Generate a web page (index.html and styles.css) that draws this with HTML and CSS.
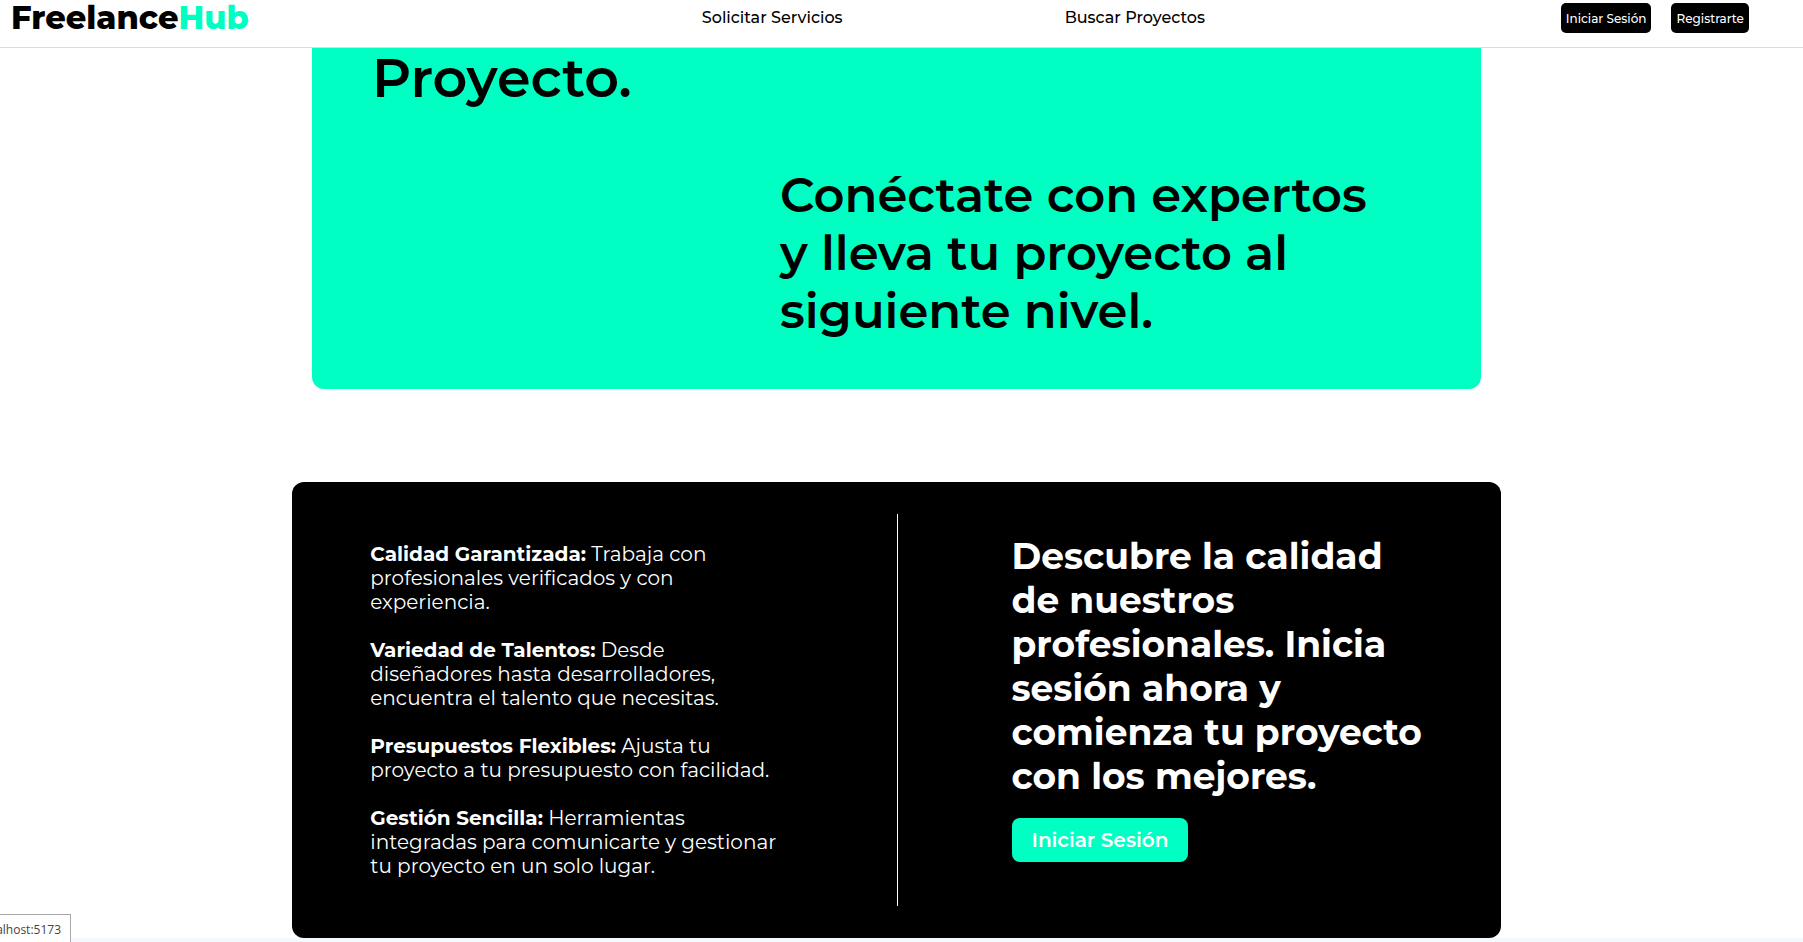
FILE: index.html
```html
<!DOCTYPE html>
<html lang="es">
<head>
  <meta charset="utf-8">
  <meta name="viewport" content="width=device-width, initial-scale=1">
  <title>FreelanceHub</title>
  <link rel="stylesheet" href="styles.css">
</head>
<body>
  <header class="header">
    <div class="logo">Freelance<span class="logo-accent">Hub</span></div>
    <nav class="nav">
      <a class="nav-link" href="#">Solicitar Servicios</a>
      <a class="nav-link" href="#">Buscar Proyectos</a>
    </nav>
    <div class="actions">
      <button class="btn-dark" type="button">Iniciar Sesión</button>
      <button class="btn-dark" type="button">Registrarte</button>
    </div>
  </header>
  <main class="main">
    <section class="hero">
      <h1 class="hero-title">Proyecto.</h1>
      <p class="hero-text">Conéctate con expertos<br>y lleva tu proyecto al<br>siguiente nivel.</p>
    </section>
    <section class="info">
      <div class="benefits">
        <p class="benefit"><strong>Calidad Garantizada:</strong> Trabaja con<br>profesionales verificados y con<br>experiencia.</p>
        <p class="benefit"><strong>Variedad de Talentos:</strong> Desde<br>diseñadores hasta desarrolladores,<br>encuentra el talento que necesitas.</p>
        <p class="benefit"><strong>Presupuestos Flexibles:</strong> Ajusta tu<br>proyecto a tu presupuesto con facilidad.</p>
        <p class="benefit"><strong>Gestión Sencilla:</strong> Herramientas<br>integradas para comunicarte y gestionar<br>tu proyecto en un solo lugar.</p>
      </div>
      <div class="cta">
        <h2 class="cta-title">Descubre la calidad<br>de nuestros<br>profesionales. Inicia<br>sesión ahora y<br>comienza tu proyecto<br>con los mejores.</h2>
        <button class="btn-accent" type="button">Iniciar Sesión</button>
      </div>
    </section>
  </main>
  <div class="status">alhost:5173</div>
</body>
</html>
```

FILE: styles.css
```css
* {
  box-sizing: border-box;
}

body {
  margin: 0;
  background: #f5f8fc;
  color: #000;
  font-family: Montserrat, Inter, sans-serif;
}

h1,
h2,
p {
  margin: 0;
}

button {
  border: 0;
  font-family: inherit;
  color: #fff;
  white-space: nowrap;
  cursor: pointer;
}

.header {
  display: grid;
  grid-template-columns: 4fr 5fr auto;
  align-items: start;
  height: 48px;
  padding: 0 3% 0 11px;
  background: #fff;
  border-bottom: 1px solid #dcdcdc;
}

.logo {
  font-size: 32px;
  line-height: 36px;
  font-weight: 800;
}

.logo-accent {
  color: #00ffc2;
}

.nav {
  display: flex;
  gap: 222px;
  padding-left: 2px;
  line-height: 36px;
}

.nav-link {
  color: #000;
  font-size: 16px;
  font-weight: 500;
  text-decoration: none;
  white-space: nowrap;
}

.actions {
  display: flex;
  gap: 20px;
  padding-top: 3px;
}

.btn-dark {
  height: 30px;
  padding: 0 5px;
  border-radius: 5px;
  background: #000;
  font-size: 12px;
  font-weight: 500;
}

.main {
  display: flex;
  flex-direction: column;
  align-items: center;
  gap: 93px;
  padding-right: 10px;
  background: #fff;
}

.hero {
  width: 65.2%;
  padding: 0 60px 49px;
  border-radius: 0 0 12px 12px;
  background: #00ffc2;
}

.hero-title {
  font-size: 54px;
  line-height: 60px;
  font-weight: 600;
}

.hero-text {
  padding: 58px 0 0 408px;
  font-size: 48px;
  line-height: 58px;
  font-weight: 600;
}

.info {
  display: grid;
  grid-template-columns: 1fr 1fr;
  width: 67.4%;
  padding: 32px 0;
  border-radius: 12px;
  background: #000;
  color: #fff;
}

.benefits {
  display: flex;
  flex-direction: column;
  gap: 24px;
  padding: 28px 0 28px 78px;
  font-size: 20px;
  line-height: 24px;
}

.cta {
  padding: 20px 0 0 114px;
  border-left: 1px solid #fff;
}

.cta-title {
  margin-bottom: 20px;
  font-size: 36px;
  line-height: 44px;
  font-weight: 700;
}

.btn-accent {
  height: 44px;
  padding: 0 20px;
  border-radius: 8px;
  background: #00ffc2;
  font-size: 20px;
  font-weight: 600;
}

.status {
  position: fixed;
  bottom: 0;
  left: 0;
  display: flex;
  justify-content: flex-end;
  width: 71px;
  padding: 6px 9px 4px 0;
  overflow: hidden;
  border: solid #a8a8a8;
  border-width: 1px 1px 0 0;
  background: #fff;
  color: #444;
  font-family: "Open Sans", sans-serif;
  font-size: 12px;
  line-height: 17px;
}
```
